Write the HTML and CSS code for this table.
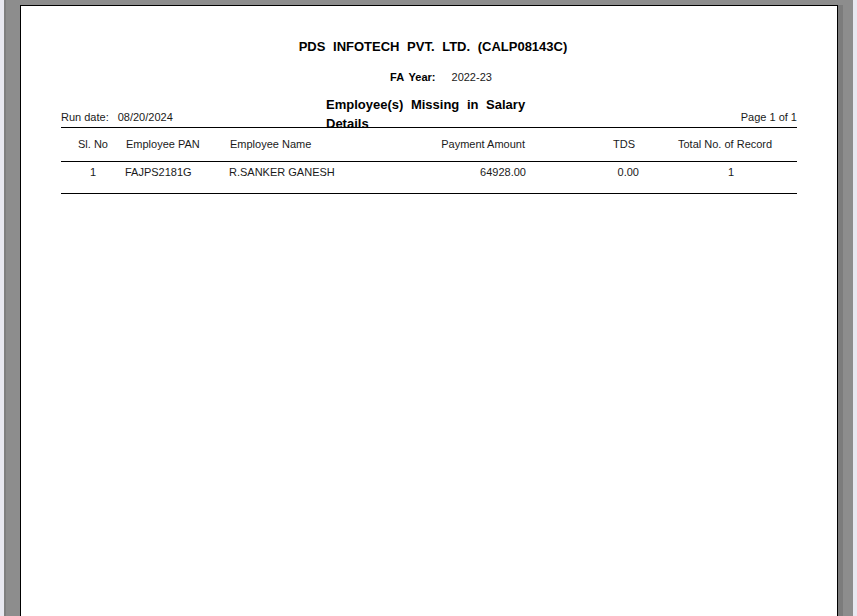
FILE: index.html
```html
<!DOCTYPE html>
<html lang="en">
<head>
<meta charset="utf-8">
<title>Employee(s) Missing in Salary Details</title>
<link rel="stylesheet" href="styles.css">
</head>
<body>
<div class="viewer">
  <div class="page">
    <div class="title">PDS INFOTECH PVT. LTD. (CALP08143C)</div>
    <div class="fa-year">
      <span class="fa-label">FA Year:</span>
      <span class="fa-value">2022-23</span>
    </div>
    <div class="head-row">
      <div class="run-date"><span class="rd-label">Run date:</span><span class="rd-value">08/20/2024</span></div>
      <div class="heading">Employee(s) Missing in Salary Details</div>
      <div class="page-no">Page 1 of 1</div>
    </div>
    <div class="grid-row hdr">
      <div class="c1">Sl. No</div>
      <div class="c2">Employee PAN</div>
      <div class="c3">Employee Name</div>
      <div class="c4">Payment Amount</div>
      <div class="c5">TDS</div>
      <div class="c6">Total No. of Record</div>
    </div>
    <div class="grid-row data">
      <div class="c1">1</div>
      <div class="c2">FAJPS2181G</div>
      <div class="c3">R.SANKER GANESH</div>
      <div class="c4">64928.00</div>
      <div class="c5">0.00</div>
      <div class="c6">1</div>
    </div>
  </div>
</div>
</body>
</html>
```

FILE: styles.css
```css
html, body {
  margin: 0;
  padding: 0;
  height: 100%;
  overflow: hidden;
}
body {
  background: #e8e8f0;
  font-family: "Liberation Sans", Arial, sans-serif;
  color: #1a1a1a;
}
.viewer {
  margin: 0 4px;
  height: 616px;
  background: #8d8d8d;
  box-sizing: border-box;
  padding: 5px 0 0 16px;
  overflow: hidden;
  border-left: 2px solid #7f7f7f;
  padding-left: 14px;
}
.page {
  width: 816px;
  min-height: 700px;
  background: #ffffff;
  border: 1px solid #000;
  border-bottom: none;
  box-sizing: content-box;
  padding: 33px 40px 0 40px;
  width: 736px;
  box-shadow: 5px 0 0 #7c7c7c;
}
.title {
  font-size: 13px;
  font-weight: bold;
  line-height: 16px;
  word-spacing: 4px;
  text-align: center;
  padding-left: 8px;
  color: #000;
}
.fa-year {
  margin-top: 14px;
  display: flex;
  justify-content: center;
  gap: 16px;
  padding-left: 24px;
  font-size: 11px;
  line-height: 16px;
}
.fa-label {
  font-weight: bold;
  word-spacing: 2px;
  color: #000;
}
.head-row {
  margin-top: 10px;
  display: grid;
  grid-template-columns: 265px 205px 1fr;
  align-items: end;
  border-bottom: 1px solid #000;
}
.run-date, .page-no {
  font-size: 11px;
  line-height: 14px;
  margin-bottom: 3px;
}
.rd-label {
  margin-right: 9px;
}
.page-no {
  text-align: right;
}
.heading {
  font-size: 13px;
  font-weight: bold;
  line-height: 19px;
  word-spacing: 4px;
  margin-bottom: -6px;
  color: #000;
}
.grid-row {
  display: grid;
  grid-template-columns: 64px 104px 171px 126px 148px 123px;
  font-size: 11px;
  border-bottom: 1px solid #000;
  white-space: nowrap;
}
.grid-row.hdr {
  line-height: 33px;
}
.grid-row.data {
  line-height: 20px;
  padding-bottom: 11px;
}
.c1 { text-align: center; }
.c2 { text-align: left; }
.c3 { text-align: left; }
.c4 { text-align: right; }
.c5 { text-align: right; }
.c6 { text-align: left; }
.hdr .c2 { padding-left: 1px; }
.hdr .c3 { padding-left: 1px; }
.hdr .c4 { padding-right: 1px; }
.hdr .c5 { padding-right: 39px; }
.hdr .c6 { padding-left: 4px; }
.data .c3 { padding-left: 0; }
.data .c5 { padding-right: 35px; }
.data .c6 { padding-left: 54px; }
```
